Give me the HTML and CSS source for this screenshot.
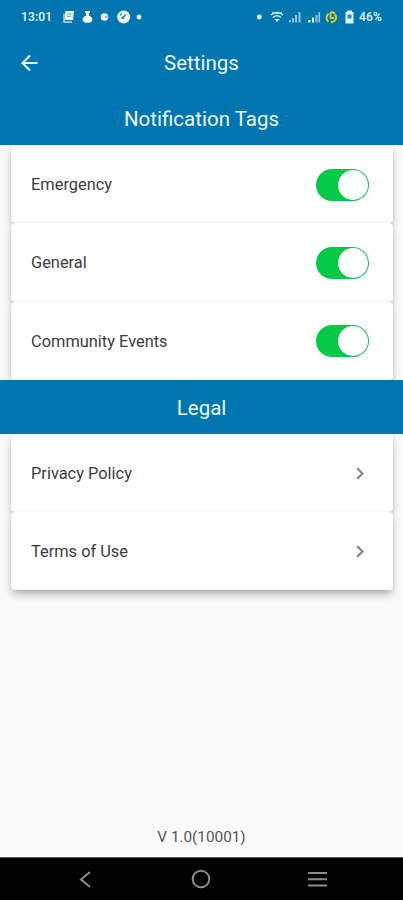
FILE: index.html
```
<!DOCTYPE html>
<html lang="en">
<head>
<meta charset="utf-8">
<title>Settings</title>
<link rel="stylesheet" href="styles.css">
</head>
<body>
<header class="status">
  <span class="time">13:01</span>
  <svg class="left-icons" width="84" height="16" viewBox="0 0 84 16" fill="#f1fbff">
    <path d="M5.500 2H14L13 11H4.500z"/><path d="M4 4.500V13H12" fill="none" stroke="#bfe3f2" stroke-width="1.300"/><path d="M7 5h5M7 7.300h4" stroke="#5b9fc6"/>
    <path d="M25 2h5v1.300l-1 1v2.200c2.500 1.200 3.800 3 3.300 5-.4 1.700-2 2.300-4.800 2.300s-4.400-.6-4.800-2.300c-.5-2 .8-3.800 3.300-5V4.300l-1-1z"/>
    <circle cx="44.500" cy="8" r="3.800"/><path d="M44.500 8h4" stroke="#6dacd0" stroke-width="1.300"/>
    <circle cx="63.700" cy="8" r="6.500"/><path d="M60 6.500l2-2M62.500 9l3.500-3.500" stroke="#3686b5" stroke-width="1.500" fill="none"/><circle cx="62.800" cy="8.800" r="1.500" fill="#3686b5"/>
    <circle cx="79" cy="8" r="2.400"/>
  </svg>
  <svg class="right-icons" width="102" height="16" viewBox="0 0 102 16" fill="#e4f5fc">
    <circle cx="4.300" cy="8" r="2.400"/>
    <g fill="none" stroke="#d6edf7" stroke-width="1.500"><path d="M16 6q6-5 12 0M18 8.500q4-3.400 8 0M17 4h10"/></g><path d="M19.500 10h5L22 13.300z"/>
    <g opacity=".62"><path d="M34 11h2v2.500h-2zM37 9h2v4.500h-2zM40 6h2v7.500h-2zM43.500 3h2v10.500h-2z"/></g>
    <path d="M53 11h2.500v2.500H53zM57 8.500h2v5h-2z"/><path d="M60.500 6h2v7.500h-2zM63.500 3h1.600v10.500h-1.600z" opacity=".65"/>
    <g fill="none" stroke="#d7ca32" stroke-width="2"><path d="M73.500 4.500c-2.600 2-2.600 6.500 0 8M79.800 5.500a4.500 4.500 0 0 1-4 7.500"/><path d="M75.500 9.500V5.500a2 2 0 0 1 4-.5M75 9h4"/></g>
    <path d="M92 1.500h5V3h1.500v11.500h-8V3H92z"/><path d="M92.500 5.500h4v4h-4z" fill="#2e87b9"/>
  </svg>
  <span class="battery">46%</span>
</header>
<div class="appbar">
  <svg class="back" width="18" height="18" viewBox="0 0 18 18"><path d="M16.500 9H2M9 1.500 1.500 9 9 16.500"/></svg>
  <h1>Settings</h1>
</div>
<h2 class="section">Notification Tags</h2>
<div class="cards">
  <div class="card"><span>Emergency</span><i class="toggle"></i></div>
  <div class="card"><span>General</span><i class="toggle"></i></div>
  <div class="card"><span>Community Events</span><i class="toggle"></i></div>
</div>
<h2 class="section legal">Legal</h2>
<div class="cards">
  <div class="card"><span>Privacy Policy</span><svg class="chevron" width="8" height="13" viewBox="0 0 8 13"><path d="M1.200 1.200 6.500 6.500 1.200 11.800"/></svg></div>
  <div class="card"><span>Terms of Use</span><svg class="chevron" width="8" height="13" viewBox="0 0 8 13"><path d="M1.200 1.200 6.500 6.500 1.200 11.800"/></svg></div>
</div>
<footer class="version">V 1.0(10001)</footer>
<nav class="navbar">
  <svg width="12" height="17" viewBox="0 0 12 17"><path d="M11 1 2 8.500 11 16"/></svg>
  <svg class="home" width="20" height="20" viewBox="0 0 20 20"><circle cx="10" cy="10" r="8.300"/></svg>
  <svg width="19" height="16" viewBox="0 0 19 16"><path d="M0 2h19M0 8.200h19M0 14.400h19"/></svg>
</nav>
</body>
</html>
```
FILE: styles.css
```
* { box-sizing: border-box; }
body {
  margin: 0;
  width: 403px;
  height: 900px;
  display: flex;
  flex-direction: column;
  overflow: hidden;
  background: #fafafa;
  color: #3c3c3c;
  font-family: Roboto, "Liberation Sans", sans-serif;
}
.status {
  height: 34px;
  display: flex;
  align-items: center;
  padding-left: 21px;
  background: #0075b0;
  color: #e8f7fd;
  font-size: 12px;
  font-weight: 500;
}
.time { width: 39px; letter-spacing: .15px; }
.right-icons { margin-left: 111px; }
.battery { margin-left: 2px; letter-spacing: .2px; }
.appbar {
  height: 58px;
  display: grid;
  grid-template-columns: 60px 1fr 60px;
  align-items: center;
  background: #0075b0;
  color: #eaf7fd;
}
.back { margin: -1px 0 0 21px; fill: none; stroke: currentColor; stroke-width: 2.1; }
h1, h2 { margin: 0; font-size: 20.5px; font-weight: 400; text-align: center; }
.section {
  position: relative;
  z-index: 1;
  height: 53px;
  line-height: 54px;
  background: #0075b0;
  color: #eaf7fd;
}
.legal { height: 54px; line-height: 56px; }
.cards { padding: 0 10.5px; }
.card {
  height: 78.3px;
  display: flex;
  align-items: center;
  justify-content: space-between;
  padding: 1px 24px 0 20.5px;
  background: #fff;
  border-radius: 4px;
  box-shadow: 0 5px 8px -1px rgba(0, 0, 0, .3), 0 0 2px rgba(0, 0, 0, .1);
  font-size: 16.4px;
}
.toggle {
  width: 52.5px;
  height: 32px;
  padding: 1px;
  display: flex;
  justify-content: flex-end;
  border-radius: 16px;
  background: #06c947;
}
.toggle::after { content: ""; width: 30px; height: 30px; border-radius: 50%; background: #fff; }
.chevron { margin-right: 5px; fill: none; stroke: #808080; stroke-width: 2; }
.version { margin-top: auto; height: 39px; line-height: 39px; text-align: center; font-size: 15.3px; color: #555; }
.navbar {
  height: 43px;
  display: flex;
  align-items: center;
  justify-content: space-between;
  padding: 0 76px 0 79px;
  border-top: 1px solid #555;
  background: #000;
}
.navbar svg { fill: none; stroke: #8b8b8b; stroke-width: 2; }
.navbar .home { margin-left: 3px; }
```
